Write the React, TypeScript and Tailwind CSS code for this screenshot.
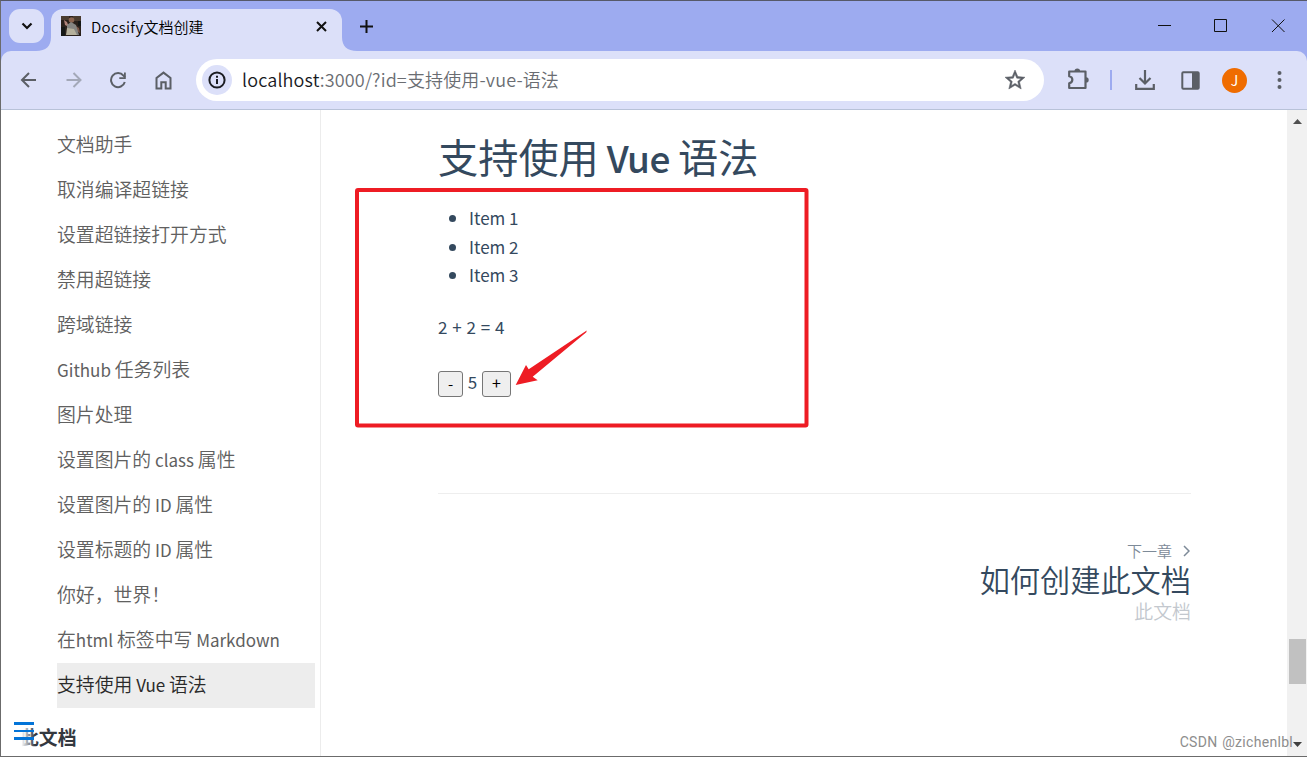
import React from "react";

const sidebarItems: string[] = [
  "文档助手",
  "取消编译超链接",
  "设置超链接打开方式",
  "禁用超链接",
  "跨域链接",
  "Github 任务列表",
  "图片处理",
  "设置图片的 class 属性",
  "设置图片的 ID 属性",
  "设置标题的 ID 属性",
  "你好，世界！",
  "在html 标签中写 Markdown",
];

/* Latin runs are set slightly smaller and heavier than the Chinese text around them. */
function MixedText({ text }: { text: string }) {
  return (
    <>
      {text.split(/([A-Za-z ]+)/).map((part, i) =>
        i % 2 === 1 ? (
          <span key={i} className="text-[17px] font-normal">
            {part}
          </span>
        ) : (
          part
        ),
      )}
    </>
  );
}

function TabStrip() {
  return (
    <div className="flex h-[50px] items-start bg-[#9dabf0]">
      <div className="ml-[8px] mt-[8px] flex h-[34px] w-[35px] items-center justify-center rounded-[11px] bg-[#dce0f9]">
        <svg width="12" height="8" viewBox="0 0 12 8" fill="none" stroke="#111" strokeWidth="2.2">
          <path d="M1.500 1.500 6 6l4.500-4.500" />
        </svg>
      </div>
      <svg className="-ml-[8px] mt-[8px] h-[42px] w-[15px] shrink-0" viewBox="0 0 15 42">
        <path d="M15 28 V42 H0 C10 42 15 37 15 28Z" fill="#dce0f9" />
      </svg>
      <div className="mt-[8px] flex h-[42px] w-[291px] items-center rounded-t-[12px] bg-[#dce0f9] pb-[8px]">
        <svg className="ml-[10px]" width="20" height="20" viewBox="0 0 20 20">
          <rect width="20" height="20" fill="#2a211c" />
          <path d="M0 0h8v4H0zM12 0h8v5h-8z" fill="#4a3c30" />
          <path d="M3 4l3 2 2 5-4-2z" fill="#b0837a" />
          <path d="M13 9l5 3 1 5-5-3z" fill="#7b5648" />
          <circle cx="10.500" cy="4" r="2.800" fill="#8a6450" />
          <path d="M6 9l4-3 5 3 3 10H6z" fill="#858582" />
          <path d="M6 12l7 1 3 6H5z" fill="#b5b09c" />
          <path d="M0 11h4v9H0zM17 5h3v5h-3z" fill="#151817" />
        </svg>
        <span className="ml-[10px] pt-[2px] font-['Noto_Sans_CJK_SC',sans-serif] text-[15px] font-[350] leading-5 text-black">
          <span className="text-[15px] tracking-[0.300px]">Docsify</span>文档创建
        </span>
        <svg className="ml-auto mr-[15px]" width="11" height="11" viewBox="0 0 11 11" stroke="#111" strokeWidth="2">
          <path d="M1 1l9 9M10 1l-9 9" />
        </svg>
      </div>
      <svg className="mt-[8px] h-[42px] w-[15px] shrink-0" viewBox="0 0 15 42">
        <path d="M0 28 V42 H15 C5 42 0 37 0 28Z" fill="#dce0f9" />
      </svg>
      <svg className="ml-[3px] mt-[19px]" width="13" height="13" viewBox="0 0 13 13" stroke="#111" strokeWidth="2">
        <path d="M6.500 0v13M0 6.500h13" />
      </svg>
      <div className="ml-auto flex items-center pr-[21px] pt-[18px]">
        <svg width="129" height="14" viewBox="0 0 129 14" fill="none" stroke="#111" strokeWidth="1">
          <path d="M1 6.500h13" />
          <path d="M57.500 .5h12v12h-12z" />
          <path d="M115 .5l12.500 12.500M127.500 .5L115 13" />
        </svg>
      </div>
    </div>
  );
}

function Toolbar() {
  return (
    <div className="bg-[#9dabf0]">
      <div className="flex h-[59px] items-center rounded-t-[10px] border-b border-[#b8c2d8] bg-[#dce0f9]">
        <svg className="ml-[19px]" width="16" height="16" viewBox="0 0 16 16" fill="none" stroke="#5b5f66" strokeWidth="2">
          <path d="M16 8H2M9 1L2 8l7 7" />
        </svg>
        <svg className="ml-[30px]" width="16" height="16" viewBox="0 0 16 16" fill="none" stroke="#a3a8b8" strokeWidth="2">
          <path d="M.5 8h14M7.500 1l7 7-7 7" />
        </svg>
        <svg className="ml-[28px]" width="17" height="17" viewBox="0 0 17 17" fill="none" stroke="#5b5f66" strokeWidth="2">
          <path d="M14.800 10A7 7 0 1 1 13.500 3.700L15 5.200" />
          <path d="M15.800 .5v6.500H9.300V5.200h4.700V.5z" fill="#5b5f66" stroke="none" />
        </svg>
        <svg className="ml-[28px]" width="17" height="19" viewBox="0 0 17 19" fill="none" stroke="#5b5f66" strokeWidth="2">
          <path d="M1.500 17.500V7L8.500 1.600l7 5.400v10.500h-4.800v-6.300H6.300v6.300z" />
        </svg>
        <div className="ml-[24px] flex h-[42px] w-[848px] items-center rounded-full bg-white">
          <div className="ml-[6px] flex h-[30px] w-[30px] items-center justify-center rounded-full bg-[#dce0f9]">
            <svg width="18" height="18" viewBox="0 0 18 18" fill="none" stroke="#1b1d22" strokeWidth="2">
              <circle cx="9" cy="9" r="7.600" />
              <path d="M9 8v5M9 4.800v2" />
            </svg>
          </div>
          <div className="mb-[2px] ml-[10px] whitespace-nowrap font-['Noto_Sans_CJK_SC',sans-serif] text-[18px] font-[350] leading-6 tracking-[0.150px] text-[#6a6d72]">
            <span className="text-[#17191d]">localhost</span>:3000/?id=支持使用-vue-语法
          </div>
          <svg className="ml-auto mr-[17px]" width="24" height="24" viewBox="0 0 24 24" fill="#5b5f66" stroke="#5b5f66" strokeWidth=".5">
            <path d="M22 9.240l-7.190-.62L12 2 9.190 8.630 2 9.240l5.460 4.730L5.820 21 12 17.270 18.180 21l-1.630-7.030L22 9.240zM12 15.400l-3.760 2.270 1-4.280-3.320-2.880 4.380-.38L12 6.100l1.710 4.040 4.380.38-3.320 2.880 1 4.280L12 15.400z" />
          </svg>
        </div>
        <svg className="mb-[2px] ml-[23px]" width="23" height="22" viewBox="0 0 23 22" fill="none" stroke="#5b5f66" strokeWidth="2.200">
          <path d="M2.200 3.500H18.500v16.500H2.200v-4.800c4.200-1 4.200-5.900 0-6.900z" strokeLinejoin="round" />
          <path d="M7.500 3a2.800 2.500 0 0 1 5.600 0zM19 9.200a2.700 2.700 0 0 1 0 5.400z" fill="#5b5f66" stroke="none" />
        </svg>
        <div className="ml-[20px] h-[20px] w-[2px] bg-[#9dabf0]" />
        <svg className="ml-[23px]" width="20" height="20" viewBox="0 0 20 20" fill="none" stroke="#5b5f66" strokeWidth="2.200">
          <path d="M10 0v13M4.500 8L10 13.500 15.500 8M1.200 14v4.800h17.600V14" />
        </svg>
        <svg className="ml-[26px]" width="19" height="19" viewBox="0 0 19 19" fill="none" stroke="#5b5f66" strokeWidth="2">
          <rect x="1.300" y="1.300" width="16.400" height="16.400" rx="1" />
          <path d="M11 1h7v17h-7z" fill="#5b5f66" stroke="none" />
        </svg>
        <div className="ml-[22px] flex h-[25px] w-[25px] items-center justify-center rounded-full bg-[#ef6c00] font-['Noto_Sans_CJK_SC',sans-serif] text-[14px] leading-none text-white">
          J
        </div>
        <svg className="ml-[30px]" width="5" height="18" viewBox="0 0 5 18" fill="#5b5f66">
          <circle cx="2.500" cy="2" r="2" />
          <circle cx="2.500" cy="9" r="2" />
          <circle cx="2.500" cy="16" r="2" />
        </svg>
      </div>
    </div>
  );
}

function Sidebar() {
  return (
    <aside className="relative h-[646px] w-[320px] shrink-0 overflow-hidden border-r border-[#ececec] pt-[13px]">
      <ul className="ml-[56px] text-[18.850px] font-[350] text-[#606060]">
        {sidebarItems.map((item) => (
          <li key={item} className="h-[45px] whitespace-nowrap leading-[42px]">
            <MixedText text={item} />
          </li>
        ))}
        <li className="h-[45px] w-[258px] whitespace-nowrap bg-[#ededed] leading-[42px] text-[#2a2a2a]">
          <MixedText text="支持使用 Vue 语法" />
        </li>
      </ul>
      <p className="ml-[19px] mt-[15px] text-[18.850px] font-bold leading-[28px] text-[#34383f]">此文档</p>
      <div className="absolute bottom-[4px] left-0 flex h-[34px] w-[34px] flex-col bg-gradient-to-r from-white from-60% to-transparent pl-[13px] pt-[4px]">
        <span className="h-[3px] w-[20px] shrink-0 bg-[#0374d8]" />
        <span className="mt-[5px] h-[2px] w-[20px] shrink-0 bg-[#0374d8]" />
        <span className="mt-[5px] h-[3px] w-[20px] shrink-0 bg-[#0374d8]" />
      </div>
    </aside>
  );
}

function Article() {
  return (
    <main className="relative flex-1 text-[#34495e]">
      <div className="ml-[117px] w-[753px] pt-[18px]">
        <h1 className="h-[58px] whitespace-nowrap text-[40.200px] leading-[56px]">
          支持使用<span className="text-[37px] font-medium tracking-[-0.400px]"> Vue </span>语法
        </h1>
        <ul className="mt-[18px] list-disc pl-[31px] text-[17px] leading-[28.500px]">
          <li>Item 1</li>
          <li>Item 2</li>
          <li>Item 3</li>
        </ul>
        <p className="mt-[22px] text-[17px] leading-[29px] [word-spacing:1px]">2 + 2 = 4</p>
        <div className="mt-[30px] flex h-[26px] items-center text-[17px]">
          <button className="flex h-[26px] w-[25px] items-center justify-center rounded-[3px] border border-[#767676] bg-[#efefef] text-[15px] leading-none text-black">-</button>
          <span className="w-[19px] pb-[3px] text-center">5</span>
          <button className="flex h-[26px] w-[29px] items-center justify-center rounded-[3px] border border-[#767676] bg-[#efefef] pb-[3px] text-[16px] leading-none text-black">+</button>
        </div>
        <nav className="mt-[96px] flex flex-col items-end border-t border-[#eeeeee] pt-[47px]">
          <div className="flex h-[21px] items-center text-[15px] font-[350] text-[#7d8a98]">
            下一章
            <svg className="ml-[11px] mr-px" width="7" height="12" viewBox="0 0 7 12" fill="none" stroke="#7d8a98" strokeWidth="1.500">
              <path d="M1 1l5 5-5 5" />
            </svg>
          </div>
          <div className="text-[30.200px] font-[350] leading-[34px]">如何创建此文档</div>
          <div className="text-[18.900px] font-[350] leading-[29px] text-[#c3c8ce]">此文档</div>
        </nav>
      </div>
      <svg className="absolute left-[34px] top-[78px]" width="454" height="240" viewBox="0 0 454 240">
        <rect x="2" y="2" width="449.500" height="235.500" rx="1" fill="none" stroke="#ee1c24" strokeWidth="4" />
        <path d="M231.700 142.600L231.300 144.300 177.700 188.700 182.700 192.300 160.700 197 171 177 173.700 181.300Z" fill="#ee1c24" />
      </svg>
      <div className="absolute bottom-[4px] right-[-6px] z-10 font-[Roboto,sans-serif] text-[14px] leading-[20px] tracking-[0.300px] text-[#8d8d8d] [word-spacing:1px]">
        CSDN @zichenlbl
      </div>
    </main>
  );
}

function Scrollbar() {
  return (
    <div className="flex w-[20px] shrink-0 flex-col items-center bg-[#f1f1f1]">
      <svg className="mt-[9px]" width="9" height="5" viewBox="0 0 9 5" fill="#505050">
        <path d="M0 5L4.500 0 9 5z" />
      </svg>
      <div className="mt-[515px] h-[45px] w-[17px] bg-[#c1c1c1]" />
      <svg className="mb-[9px] mt-auto" width="9" height="5" viewBox="0 0 9 5" fill="#404040">
        <path d="M0 0L4.500 5 9 0z" />
      </svg>
    </div>
  );
}

export default function App() {
  return (
    <div className="flex h-[757px] w-[1307px] flex-col overflow-hidden border-b border-l border-t border-b-[#6b6b6b] border-l-[#6b6b6b] border-t-[#565969] bg-white font-['Noto_Sans_CJK_SC',sans-serif]">
      <TabStrip />
      <Toolbar />
      <div className="flex min-h-0 flex-1">
        <Sidebar />
        <Article />
        <Scrollbar />
      </div>
    </div>
  );
}
